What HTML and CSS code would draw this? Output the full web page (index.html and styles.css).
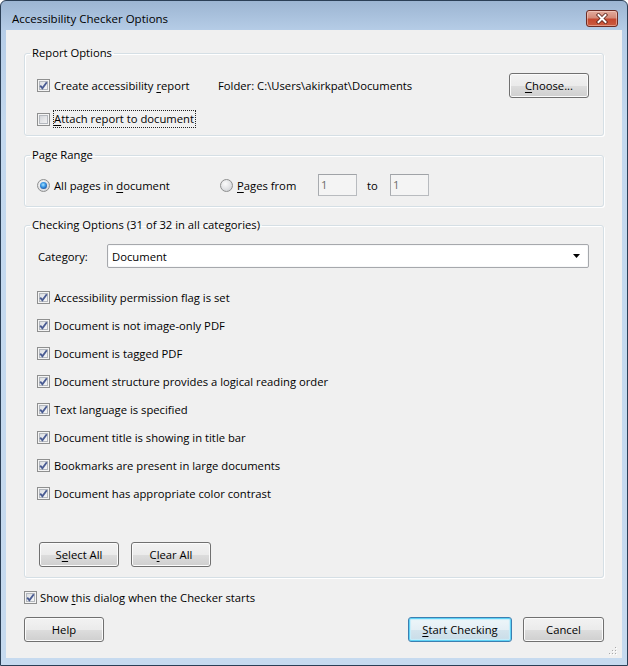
FILE: index.html
```html
<!DOCTYPE html>
<html>
<head>
<meta charset="utf-8">
<title>Accessibility Checker Options</title>
<link rel="stylesheet" href="styles.css">
</head>
<body>
<div class="window">
  <div class="titlebar">
    <div class="title">Accessibility Checker Options</div>
    <div class="close">
      <svg width="14" height="11" viewBox="0 0 14 11">
        <path d="M3.5 2 L10.5 9 M10.5 2 L3.5 9" stroke="#5a2219" stroke-width="3.6" stroke-linecap="square" fill="none"/>
        <path d="M3.5 2 L10.5 9 M10.5 2 L3.5 9" stroke="#ffffff" stroke-width="2" stroke-linecap="square" fill="none"/>
      </svg>
    </div>
  </div>
  <div class="client">
    <fieldset class="group g-report">
      <legend>Report Options</legend>
      <div class="gbody">
        <div class="row r-create">
          <label class="opt w-create">
            <span class="cb on"><svg width="11" height="11" viewBox="0 0 11 11"><path d="M2.2 5.6 L4.4 8.2 L8.8 2.2" stroke="#4a5c93" stroke-width="1.9" fill="none"/></svg></span>
            <span class="txt">Create accessibility <u>r</u>eport</span>
          </label>
          <span class="folder">Folder: C:\Users\akirkpat\Documents</span>
          <button class="btn btn-choose"><u>C</u>hoose...</button>
        </div>
        <div class="row r-attach">
          <label class="opt">
            <span class="cb"></span>
            <span class="txt focus"><u>A</u>ttach report to document</span>
          </label>
        </div>
      </div>
    </fieldset>

    <fieldset class="group g-range">
      <legend>Page Range</legend>
      <div class="gbody">
        <div class="row r-range">
          <label class="opt w-all"><span class="rb on"></span><span class="txt">All pages in <u>d</u>ocument</span></label>
          <label class="opt w-from"><span class="rb"></span><span class="txt"><u>P</u>ages from</span></label>
          <span class="edit">1</span>
          <span class="to">to</span>
          <span class="edit">1</span>
        </div>
      </div>
    </fieldset>

    <fieldset class="group g-check">
      <legend>Checking Options (31 of 32 in all categories)</legend>
      <div class="gbody">
        <div class="row r-cat">
          <span class="catlabel">Cate<u>g</u>ory:</span>
          <div class="combo">
            <span class="combotext">Document</span>
            <svg class="arrow" width="7" height="4" viewBox="0 0 7 4"><path d="M0 0 H7 L3.5 4 Z" fill="#000"/></svg>
          </div>
        </div>
        <div class="checks">
          <label class="opt crow"><span class="cb on"><svg width="11" height="11" viewBox="0 0 11 11"><path d="M2.2 5.6 L4.4 8.2 L8.8 2.2" stroke="#4a5c93" stroke-width="1.9" fill="none"/></svg></span><span class="txt">Accessibility permission flag is set</span></label>
          <label class="opt crow"><span class="cb on"><svg width="11" height="11" viewBox="0 0 11 11"><path d="M2.2 5.6 L4.4 8.2 L8.8 2.2" stroke="#4a5c93" stroke-width="1.9" fill="none"/></svg></span><span class="txt">Document is not image-only PDF</span></label>
          <label class="opt crow"><span class="cb on"><svg width="11" height="11" viewBox="0 0 11 11"><path d="M2.2 5.6 L4.4 8.2 L8.8 2.2" stroke="#4a5c93" stroke-width="1.9" fill="none"/></svg></span><span class="txt">Document is tagged PDF</span></label>
          <label class="opt crow"><span class="cb on"><svg width="11" height="11" viewBox="0 0 11 11"><path d="M2.2 5.6 L4.4 8.2 L8.8 2.2" stroke="#4a5c93" stroke-width="1.9" fill="none"/></svg></span><span class="txt">Document structure provides a logical reading order</span></label>
          <label class="opt crow"><span class="cb on"><svg width="11" height="11" viewBox="0 0 11 11"><path d="M2.2 5.6 L4.4 8.2 L8.8 2.2" stroke="#4a5c93" stroke-width="1.9" fill="none"/></svg></span><span class="txt">Text language is specified</span></label>
          <label class="opt crow"><span class="cb on"><svg width="11" height="11" viewBox="0 0 11 11"><path d="M2.2 5.6 L4.4 8.2 L8.8 2.2" stroke="#4a5c93" stroke-width="1.9" fill="none"/></svg></span><span class="txt">Document title is showing in title bar</span></label>
          <label class="opt crow"><span class="cb on"><svg width="11" height="11" viewBox="0 0 11 11"><path d="M2.2 5.6 L4.4 8.2 L8.8 2.2" stroke="#4a5c93" stroke-width="1.9" fill="none"/></svg></span><span class="txt">Bookmarks are present in large documents</span></label>
          <label class="opt crow"><span class="cb on"><svg width="11" height="11" viewBox="0 0 11 11"><path d="M2.2 5.6 L4.4 8.2 L8.8 2.2" stroke="#4a5c93" stroke-width="1.9" fill="none"/></svg></span><span class="txt">Document has appropriate color contrast</span></label>
        </div>
        <div class="row r-selbtns">
          <button class="btn btn-80">S<u>e</u>lect All</button>
          <button class="btn btn-80">C<u>l</u>ear All</button>
        </div>
      </div>
    </fieldset>

    <label class="opt r-show">
      <span class="cb on"><svg width="11" height="11" viewBox="0 0 11 11"><path d="M2.2 5.6 L4.4 8.2 L8.8 2.2" stroke="#4a5c93" stroke-width="1.9" fill="none"/></svg></span>
      <span class="txt">Show <u>t</u>his dialog when the Checker starts</span>
    </label>

    <div class="row r-bottom">
      <button class="btn btn-80">Help</button>
      <div class="spacer"></div>
      <button class="btn btn-default btn-start"><u>S</u>tart Checking</button>
      <button class="btn btn-cancel">Cancel</button>
    </div>

    <svg class="grip" width="8" height="8" viewBox="0 0 8 8">
      <rect x="7" y="1" width="1" height="1" fill="#fff"/><rect x="6" y="0" width="1" height="1" fill="#a9a9a9"/>
      <rect x="7" y="4" width="1" height="1" fill="#fff"/><rect x="6" y="3" width="1" height="1" fill="#a9a9a9"/>
      <rect x="4" y="4" width="1" height="1" fill="#fff"/><rect x="3" y="3" width="1" height="1" fill="#a9a9a9"/>
      <rect x="7" y="7" width="1" height="1" fill="#fff"/><rect x="6" y="6" width="1" height="1" fill="#a9a9a9"/>
      <rect x="4" y="7" width="1" height="1" fill="#fff"/><rect x="3" y="6" width="1" height="1" fill="#a9a9a9"/>
      <rect x="1" y="7" width="1" height="1" fill="#fff"/><rect x="0" y="6" width="1" height="1" fill="#a9a9a9"/>
    </svg>
  </div>
</div>
</body>
</html>
```

FILE: styles.css
```css
* { box-sizing: border-box; }
html, body { margin: 0; padding: 0; }
body {
  font-family: "Open Sans", "Noto Sans", "DejaVu Sans", sans-serif;
  font-size: 11.25px;
  color: #000;
  background: #ffffff;
}
u { text-decoration: underline; text-underline-offset: 2px; }

.window {
  width: 628px;
  height: 666px;
  border: 1px solid #2b3f56;
  border-radius: 6px 6px 0 0;
  background: linear-gradient(#9cb5d2 0px, #b6cde7 30px, #c3d8ee 120px, #c6daef 100%);
  padding: 0 5px 7px 5px;
  display: flex;
  flex-direction: column;
}

.titlebar {
  height: 29px;
  flex: none;
  display: flex;
  align-items: flex-start;
  padding: 9px 4px 0 6px;
}
.title {
  flex: 1;
  margin-top: 1px;
  line-height: 16px;
  font-size: 11.5px;
  color: #000;
}
.close {
  width: 32px;
  height: 17px;
  border: 1px solid #6d2c24;
  border-radius: 3px;
  background: linear-gradient(#e3ab9c 0%, #d48a78 45%, #c5482f 55%, #cb5c40 100%);
  box-shadow: inset 0 0 0 1px rgba(255, 225, 215, 0.45);
  display: flex;
  align-items: center;
  justify-content: center;
}

.client {
  flex: 1;
  position: relative;
  background: #f0f0f0;
  padding: 15px 18px 0 18px;
  display: flex;
  flex-direction: column;
}

.group {
  margin: 0;
  padding: 0;
  min-width: 0;
  border: 1px solid #d5dfe5;
  border-radius: 3px;
  box-shadow: inset 1px 1px 0 #ffffff, 1px 1px 0 #ffffff;
}
.group legend {
  margin-left: 5px;
  padding: 0 2px;
  line-height: 16px;
  height: 16px;
  color: #000;
}
.g-range { margin-top: 11px; }
.g-check { margin-top: 10px; }

.row { display: flex; align-items: center; }

.opt { display: flex; align-items: center; }
.opt .txt { margin-left: 4px; white-space: nowrap; }

.cb {
  width: 13px;
  height: 13px;
  flex: none;
  border: 1px solid #8e8f8f;
  background: linear-gradient(135deg, #c9cdd3 0%, #e6e7e9 55%, #f7f7f7 100%);
  box-shadow: inset 0 0 0 1px #f4f4f4, inset 0 0 0 2px #b4b8be;
  display: flex;
  align-items: center;
  justify-content: center;
}
.cb.on { background: linear-gradient(135deg, #d3d6db 0%, #eceef0 55%, #fafafa 100%); }

.rb {
  width: 13px;
  height: 13px;
  flex: none;
  border-radius: 50%;
  border: 1px solid #8e8f8f;
  background: radial-gradient(circle at 40% 35%, #fbfbfb 0%, #e3e4e6 50%, #c6c9cd 100%);
  display: flex;
  align-items: center;
  justify-content: center;
}
.rb.on::after {
  content: "";
  width: 7px;
  height: 7px;
  border-radius: 50%;
  background: radial-gradient(circle at 45% 40%, #a9e4ff 0%, #3a98e6 40%, #1b4f9c 80%, #0e3472 100%);
}

.btn {
  height: 25px;
  padding: 0;
  margin: 0;
  font: inherit;
  color: #000;
  border: 1px solid #707070;
  border-radius: 3px;
  background: linear-gradient(#f2f2f2 0%, #ebebeb 50%, #dddddd 51%, #cfcfcf 100%);
  box-shadow: inset 0 0 0 1px #fbfbfb;
  display: flex;
  align-items: center;
  justify-content: center;
  flex: none;
}
.btn-80 { width: 80px; }
.btn-choose { width: 80px; margin-left: auto; }
.btn-start { width: 104px; }
.btn-cancel { width: 81px; margin-left: 11px; }
.btn-default {
  border-color: #3c7fb1;
  background: linear-gradient(#eef6fa 0%, #e4eff5 50%, #d4e4ed 51%, #c9dce7 100%);
  box-shadow: inset 0 0 0 1px #5fd3f6, inset 0 0 1px 2px #c6eefb;
}

/* Report options */
.g-report .gbody { padding: 12px 14px 7px 12px; }
.r-create { height: 25px; }
.w-create { width: 181px; flex: none; }
.folder { white-space: nowrap; }
.r-attach { height: 18px; margin-top: 12px; }
.focus { border: 1px dotted #222; padding: 0 1px 0 0; line-height: 16px; margin-left: 3px !important; }

/* Page range */
.g-range .gbody { padding: 11px 14px 10px 12px; }
.r-range { height: 22px; }
.w-all { width: 183px; flex: none; }
.w-from { width: 98px; flex: none; }
.edit {
  width: 39px;
  height: 22px;
  flex: none;
  border: 1px solid #b8bbbf;
  border-top-color: #a0a3a7;
  border-left-color: #a8abaf;
  background: #f4f4f4;
  color: #6d6d6d;
  padding-left: 2px;
  line-height: 19px;
}
.to { width: 33px; flex: none; padding-left: 10px; }

/* Checking options */
.g-check .gbody { padding: 11px 14px 10px 12px; }
.r-cat { height: 24px; }
.catlabel { width: 70px; flex: none; padding-left: 1px; }
.combo {
  flex: 1;
  height: 24px;
  background: #ffffff;
  border: 1px solid #a6a8ac;
  border-radius: 2px;
  box-shadow: inset 0 0 0 1px #f7f8f9;
  display: flex;
  align-items: center;
  padding: 0 8px 0 4px;
}
.combotext { flex: 1; }
.arrow { flex: none; }
.checks { margin-top: 15px; display: flex; flex-direction: column; }
.crow { height: 28px; }
.r-selbtns { margin-top: 35px; padding-left: 2px; gap: 12px; }

/* Bottom */
.r-show { height: 18px; margin-top: 10px; }
.r-show .txt { margin-left: 3px; }
.r-bottom { margin-top: 11px; height: 25px; }
.spacer { flex: 1; }

.grip { position: absolute; right: 5px; bottom: 3px; }
```
